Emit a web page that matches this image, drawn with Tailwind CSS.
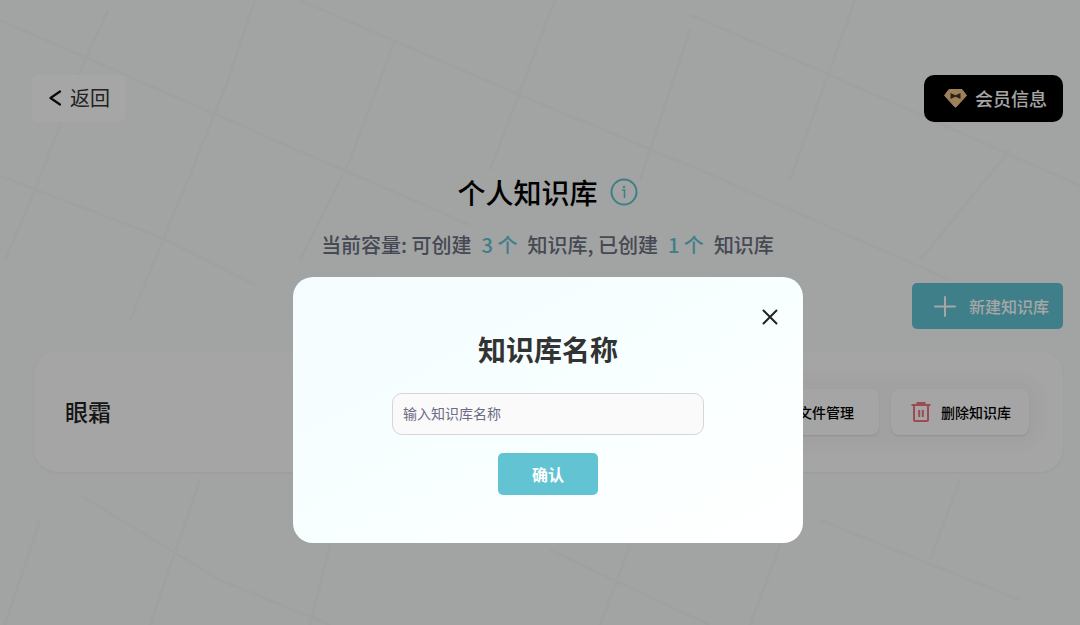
<!DOCTYPE html>
<html lang="zh-CN">
<head>
  <meta charset="UTF-8" />
  <title>个人知识库</title>
  <meta name="viewport" content="width=device-width, initial-scale=1" />
  <script src="https://cdn.jsdelivr.net/npm/@tailwindcss/browser@4"></script>
</head>
<body class="relative min-h-screen overflow-x-hidden bg-[#f9fafa] font-['Noto_Sans_CJK_SC',sans-serif] text-[#222]">

  <!-- Background lines -->
  <svg class="absolute inset-0 -z-10 h-full w-full" viewBox="0 0 1080 625" preserveAspectRatio="xMidYMid slice" fill="none" stroke="#f5f8f8" stroke-width="3" aria-hidden="true">
    <path d="M0 20L210 112L470 225M300 0L520 95L700 170L950 280M0 176L160 237L255 285M690 15L830 75L950 128L1080 186M108 10L85 60L35 190L5 260M255 0L230 75L190 175L130 320M395 40L350 160L300 260M555 0L490 170M690 30L640 180M855 0L790 180M1010 150L920 260M80 495L220 580L330 625M550 550L710 625M820 520L1020 600M200 480L150 625M40 520L5 625M330 545L310 625M630 545L600 625M780 545L750 625M960 480L930 560" />
  </svg>

  <div class="flex flex-col pt-[75px] pr-[17px] pl-8">
    <!-- Top bar -->
    <header class="flex items-center justify-between">
      <button class="flex h-[47px] items-center gap-2 rounded-md bg-white px-4 pb-0.5 text-xl text-[#333]">
        <svg class="h-4 w-[14px]" viewBox="0 0 14 16" fill="none" stroke="#111" stroke-width="2.200" stroke-linecap="round" stroke-linejoin="round"><path d="M12 1.500L2.500 8l9.500 6.500" /></svg>
        返回
      </button>
      <button class="flex h-[47px] items-center gap-[7px] rounded-[10px] bg-black px-4 pb-0.5 text-lg font-medium text-white">
        <svg class="h-6 w-7" viewBox="0 0 28 24">
          <path d="M9 3.500h13l4.500 6L16 21h-1L4.500 9.500z" fill="#f2c68c" stroke="#f2c68c" stroke-linejoin="round" />
          <path d="M10.500 7l5 2.200L20.500 7v6l-5-2.200-5 2.200z" fill="#4a3420" />
        </svg>
        会员信息
      </button>
    </header>

    <!-- Title -->
    <div class="mt-[50px] flex items-center justify-center gap-3">
      <h1 class="text-[28px] leading-10 font-medium text-black">个人知识库</h1>
      <button aria-label="说明">
        <svg class="size-7" viewBox="0 0 28 28" fill="none" stroke="#62c3d3" stroke-width="2"><circle cx="14" cy="14" r="12.500" /><path d="M12 12h2.500v8" stroke-width="1.500" /><circle cx="14" cy="9" r="1.200" fill="#62c3d3" stroke="none" /></svg>
      </button>
    </div>
    <p class="mt-[19px] flex justify-center gap-[10px] text-xl leading-7 font-medium text-[#6b7080]">
      <span>当前容量: 可创建</span>
      <span class="text-[#62c3d3]">3 个</span>
      <span>知识库, 已创建</span>
      <span class="text-[#62c3d3]">1 个</span>
      <span>知识库</span>
    </p>

    <button class="mt-6 flex h-[46px] items-center gap-3 self-end rounded-[5px] bg-[#62c3d3] pr-[14px] pl-[21px] text-base font-medium text-white">
      <svg class="size-6" viewBox="0 0 24 24" fill="none" stroke="currentColor" stroke-width="2" stroke-linecap="round"><path d="M12 3v19M2 12.500h20" /></svg>
      新建知识库
    </button>

    <!-- Knowledge base list -->
    <section class="mt-[22px] ml-0.5 flex h-[121px] items-center justify-between rounded-3xl bg-[#fefefe] pr-[34px] pl-[31px] shadow-[0_1px_3px_#0000000d]">
      <h2 class="text-[23px] font-medium">眼霜</h2>
      <div class="flex gap-3 rounded-xl bg-[#f7f7f7] shadow-[0_0_16px_14px_#f7f7f7]">
        <button class="flex h-[46px] items-center gap-2 rounded-lg bg-[#fdfdfd] pr-[25px] pl-5 text-sm font-medium text-black shadow-[0_1px_2px_#0000001a]">
          <svg class="size-6" viewBox="0 0 24 24" fill="none" stroke="#62c3d3" stroke-width="2"><path d="M3 5h7l2 3h9v11H3z" /></svg>
          文件管理
        </button>
        <button class="flex h-[46px] items-center gap-2 rounded-lg bg-[#fdfdfd] px-[18px] text-sm font-medium text-black shadow-[0_1px_2px_#0000001a]">
          <svg class="size-6" viewBox="0 0 24 24" fill="none" stroke="#ee7680" stroke-width="2"><path d="M2.500 5h19M7.500 3h9M5 5V20q0 1 1 1h12q1 0 1-1V5M10.200 10v7M13.800 10v7" /></svg>
          删除知识库
        </button>
      </div>
    </section>
  </div>

  <!-- Create dialog -->
  <div class="fixed inset-0 flex items-center justify-center bg-black/35 pt-[195px] pl-4">
    <form role="dialog" aria-labelledby="dialogTitle" class="relative flex w-full max-w-[510px] flex-col items-center rounded-[20px] bg-linear-to-br from-[#f4fcff] via-[#f8ffff] to-white px-[99px] pt-[52px] pb-12">
      <button type="button" aria-label="关闭" class="absolute top-7 right-[21px] p-1">
        <svg class="size-4" viewBox="0 0 16 16" fill="none" stroke="#222" stroke-width="2" stroke-linecap="round"><path d="M1.500 1.500l13 13M14.500 1.500l-13 13" /></svg>
      </button>
      <h2 id="dialogTitle" class="text-[28px] leading-10 font-bold text-[#333]">知识库名称</h2>
      <input type="text" aria-label="知识库名称" placeholder="输入知识库名称" class="mt-6 h-[42px] w-full rounded-[10px] border border-[#d5d5dc] bg-[#fafafa] px-[10px] pb-0.5 text-sm placeholder:text-[#6b6b85]" />
      <button type="submit" class="mt-[18px] h-[42px] rounded-[5px] bg-[#62c3d3] px-[34px] text-base font-bold text-white">确认</button>
    </form>
  </div>

</body>
</html>
